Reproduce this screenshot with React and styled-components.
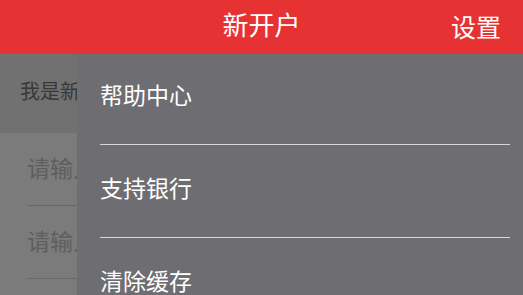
import React from "react";
import styled, { createGlobalStyle } from "styled-components";

const Global = createGlobalStyle`
  html, body { margin: 0; padding: 0; }
  body {
    width: 523px;
    height: 295px;
    overflow: hidden;
    font-family: "Noto Sans CJK SC", "Noto Sans", sans-serif;
    background: #7b7b7b;
  }
`;

const Screen = styled.div`
  position: relative;
  width: 523px;
  height: 295px;
  overflow: hidden;
  display: flex;
  flex-direction: column;
`;

const Header = styled.header`
  height: 54px;
  flex: none;
  background: #e63232;
  color: #fff;
  display: grid;
  grid-template-columns: 1fr auto 1fr;
  align-items: center;
  padding: 0 22px 6px;
  box-sizing: border-box;
`;

const Title = styled.div`
  font-size: 26px;
  line-height: 1;
  grid-column: 2;
`;

const Action = styled.div`
  font-size: 25px;
  line-height: 1;
  justify-self: end;
  margin-top: 4px;
`;

const Body = styled.main`
  flex: 1;
  display: flex;
  flex-direction: column;
  background: #7b7b7b;
`;

const TypeRow = styled.div`
  height: 79px;
  background: #717171;
  display: flex;
  align-items: center;
  padding: 0 0 6px 20px;
  box-sizing: border-box;
  font-size: 20px;
  color: #383838;
  white-space: nowrap;
`;

const Field = styled.div`
  height: 73px;
  margin-left: 27px;
  border-bottom: 1px solid #686868;
  display: flex;
  align-items: center;
  padding-bottom: 4px;
  box-sizing: border-box;
  font-size: 23px;
  color: #5e5e5e;
  white-space: nowrap;
`;

const Drawer = styled.nav`
  position: absolute;
  left: 77px;
  right: 0;
  top: 54px;
  bottom: 0;
  background: #6e6d72;
  display: flex;
  flex-direction: column;
`;

const Item = styled.div`
  height: 90px;
  flex: none;
  display: flex;
  align-items: center;
  padding: 0 0 10px 23px;
  box-sizing: border-box;
  font-size: 23px;
  color: #fff;
`;

const Divider = styled.div`
  height: 1px;
  flex: none;
  margin: 0 13px 2px 23px;
  background: #d9d9dc;
`;

const items = ["帮助中心", "支持银行", "清除缓存"];

export default function App() {
  return (
    <>
      <Global />
      <Screen>
        <Header>
          <Title>新开户</Title>
          <Action>设置</Action>
        </Header>
        <Body>
          <TypeRow>我是新客户</TypeRow>
          <Field>请输入手机号</Field>
          <Field>请输入验证码</Field>
        </Body>
        <Drawer>
          {items.map((t, i) => (
            <React.Fragment key={t}>
              <Item>{t}</Item>
              {i < items.length - 1 && <Divider />}
            </React.Fragment>
          ))}
        </Drawer>
      </Screen>
    </>
  );
}
